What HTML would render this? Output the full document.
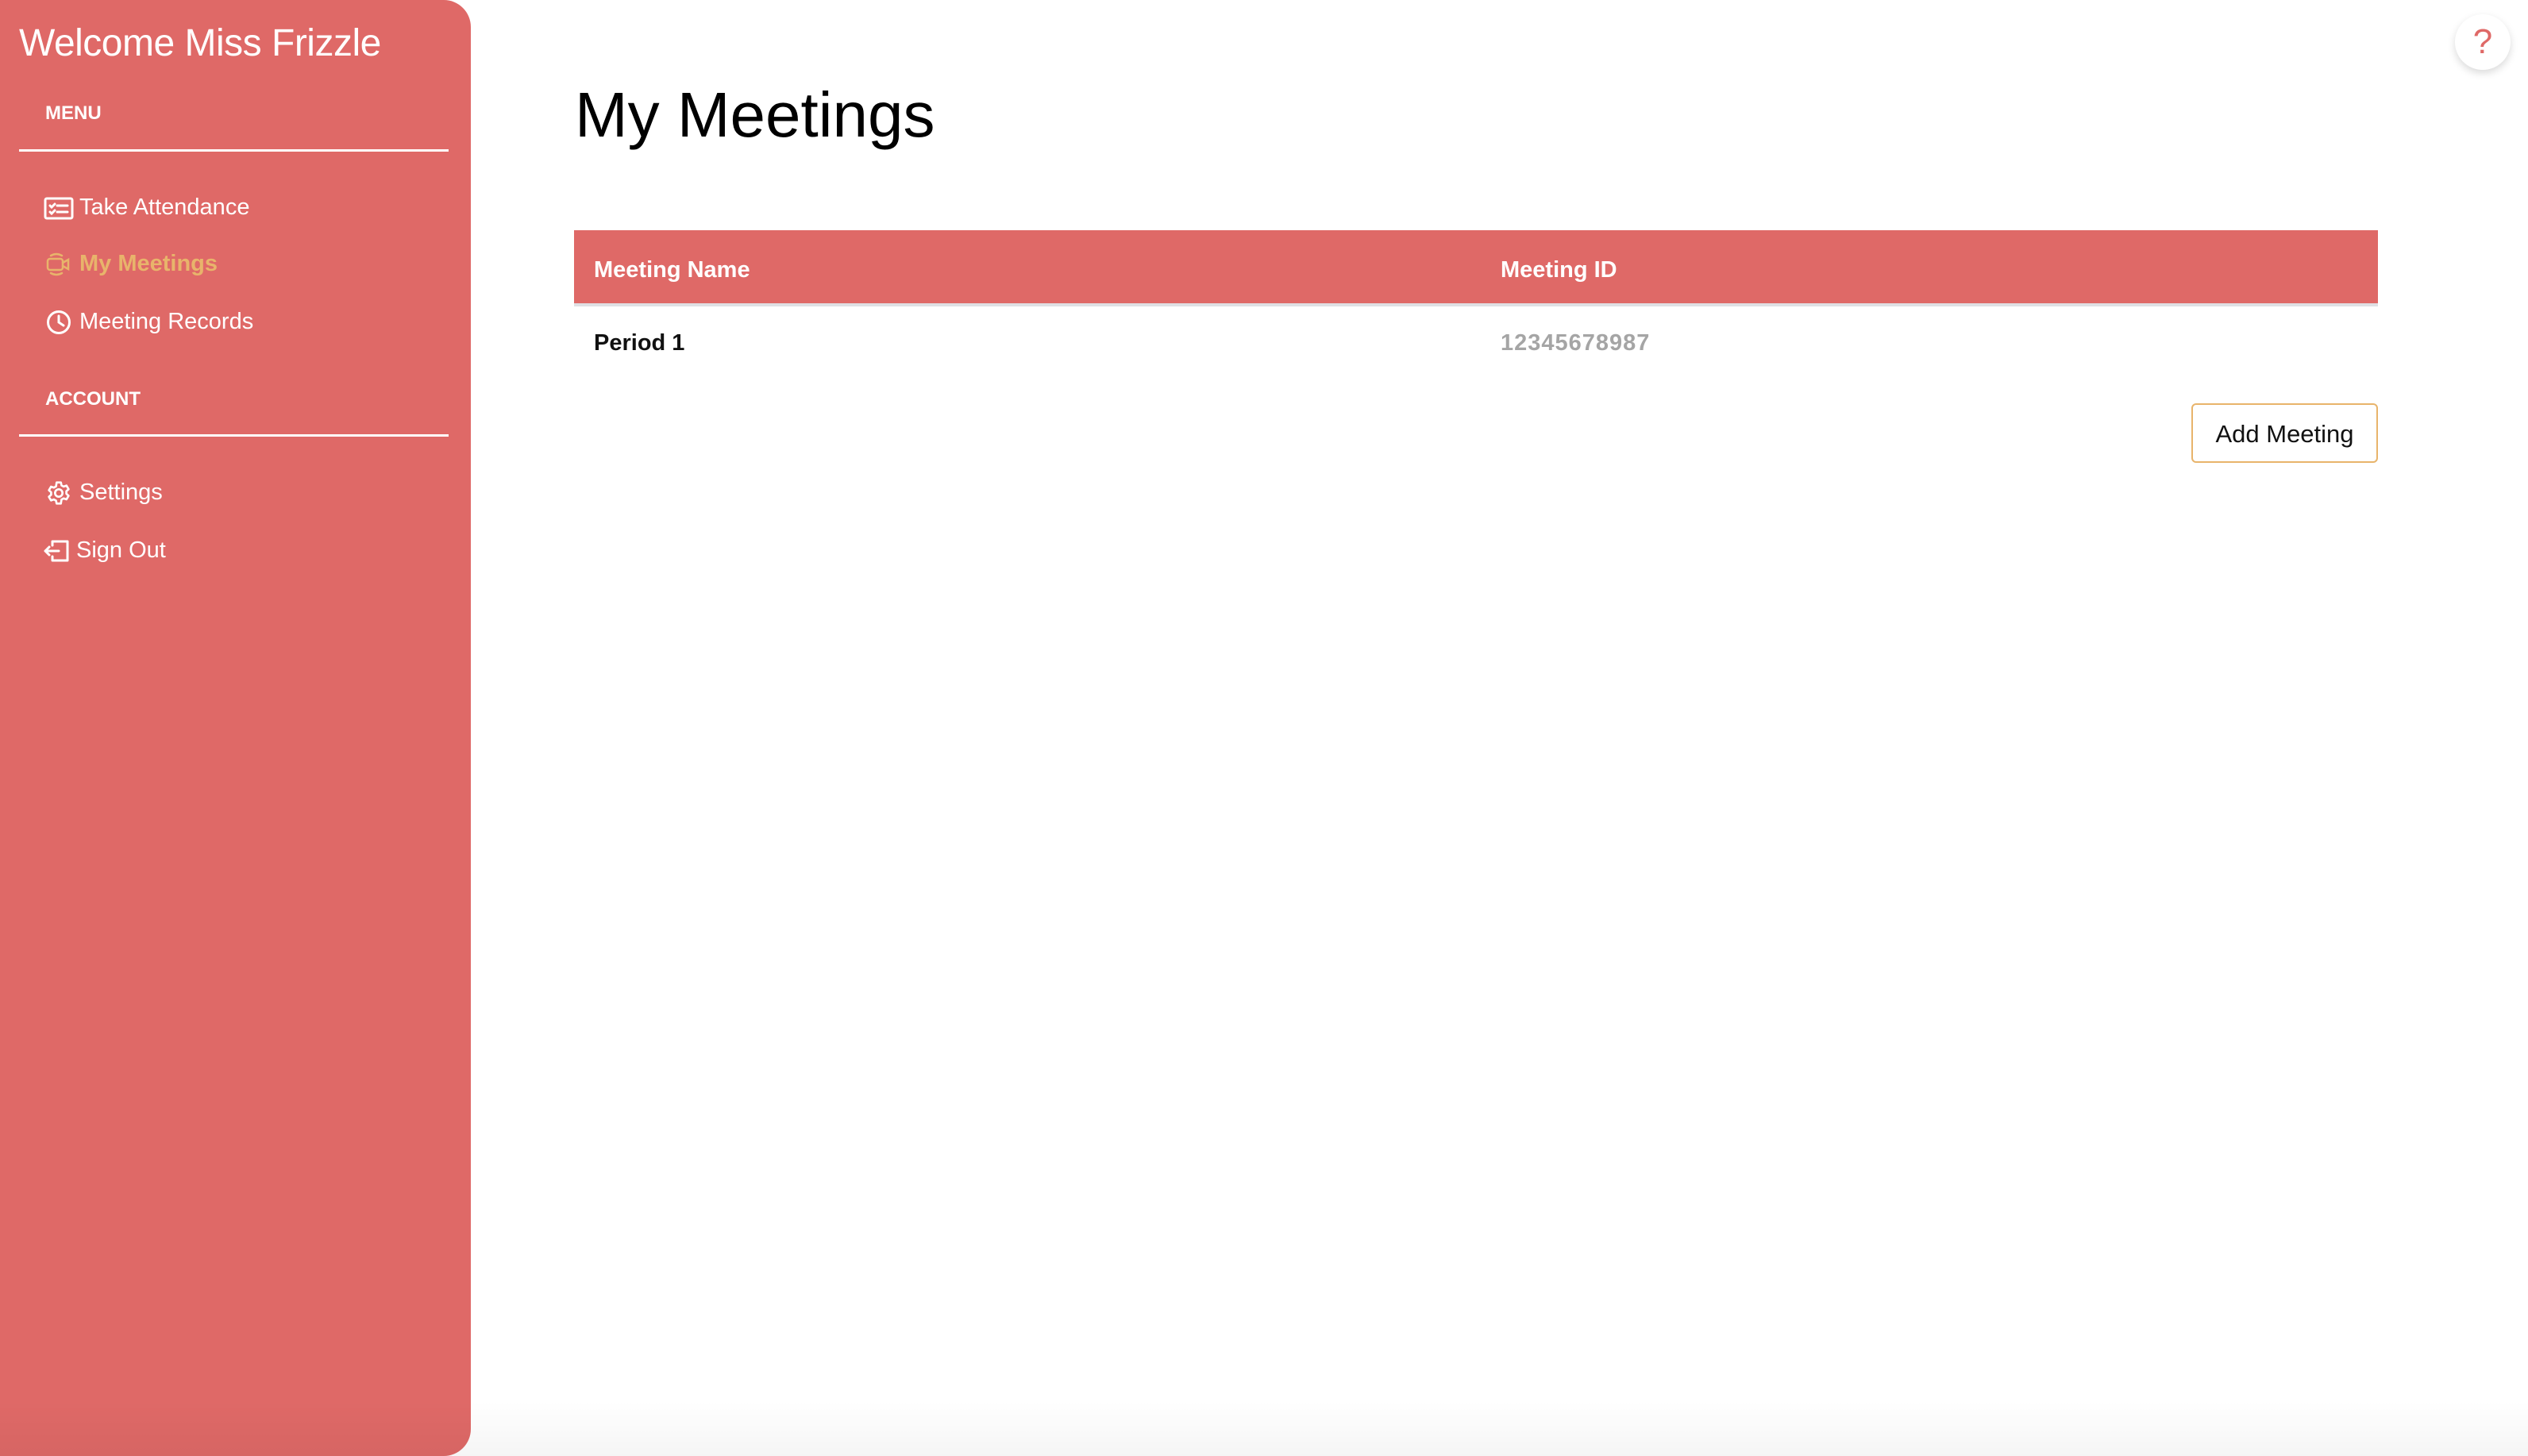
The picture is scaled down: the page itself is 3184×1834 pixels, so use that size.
<!DOCTYPE html>
<html><head><meta charset="utf-8"><style>
*{margin:0;padding:0;box-sizing:border-box}
html,body{width:3184px;height:1834px;overflow:hidden;background:#fff;font-family:"Liberation Sans",Arial,sans-serif;position:relative}
.sb{position:absolute;left:0;top:0;width:593px;height:1834px;background:#df6967;border-radius:0 34px 34px 0}
.t{position:absolute;white-space:nowrap;line-height:1}
.w{color:#fff}
.line{position:absolute;left:24px;width:541px;height:3px;background:#fff}
.ic{position:absolute}
.fade{position:absolute;left:0;bottom:0;width:3184px;height:70px;background:linear-gradient(rgba(0,0,0,0),rgba(0,0,0,0.04))}
</style></head><body>
<div class="sb"></div>
<div class="t w" style="left:24px;top:31px;font-size:48px;letter-spacing:-0.5px">Welcome Miss Frizzle</div>
<div class="t w" style="left:57px;top:131px;font-size:24px;font-weight:bold">MENU</div>
<div class="line" style="top:188px"></div>
<svg class="ic" style="left:55px;top:248px" width="38" height="29" viewBox="0 0 38 29" fill="none" stroke="#fff" stroke-width="3" stroke-linecap="round"><rect x="2" y="2" width="34" height="25" rx="2"/><path d="M8 11l2 2 4-4M8 19l2 2 4-4M17 11h13M17 19h13"/></svg>
<div class="t w" style="left:100px;top:247px;font-size:29px">Take Attendance</div>
<svg class="ic" style="left:58px;top:318px" width="32" height="30" viewBox="0 0 32 30" fill="none" stroke="#e8b46b" stroke-width="2.5" stroke-linecap="round"><rect x="2" y="8" width="19" height="14" rx="3"/><path d="M21 13l7-4v12l-7-4M6 4q7-4 14 0M6 26q7 4 14 0"/></svg>
<div class="t" style="left:100px;top:318px;font-size:29px;font-weight:bold;color:#e8b46b">My Meetings</div>
<svg class="ic" style="left:58px;top:390px" width="32" height="32" viewBox="0 0 32 32" fill="none" stroke="#fff" stroke-width="3" stroke-linecap="round"><circle cx="16" cy="16" r="13.5"/><path d="M16 8v8l6 4"/></svg>
<div class="t w" style="left:100px;top:391px;font-size:29px">Meeting Records</div>
<div class="t w" style="left:57px;top:491px;font-size:24px;font-weight:bold">ACCOUNT</div>
<div class="line" style="top:547px"></div>
<svg class="ic" style="left:58px;top:605px" width="32" height="32" viewBox="0 0 24 24" fill="none" stroke="#fff" stroke-width="2" stroke-linejoin="round"><path d="M10 2h4l.6 2.8 2 1.1 2.7-.9 2 3.4-2.1 1.9v2.4l2.1 1.9-2 3.4-2.7-.9-2 1.1L14 22h-4l-.6-2.8-2-1.1-2.7.9-2-3.4 2.1-1.9v-2.4L2.7 9.4l2-3.4 2.7.9 2-1.1z"/><circle cx="12" cy="12" r="3.5"/></svg>
<div class="t w" style="left:100px;top:606px;font-size:29px">Settings</div>
<svg class="ic" style="left:54px;top:679px" width="34" height="30" viewBox="0 0 34 30" fill="none" stroke="#fff" stroke-width="3" stroke-linecap="round" stroke-linejoin="round"><path d="M12 8V3h19v24H12v-5M3 15h17M8 10l-5 5 5 5"/></svg>
<div class="t w" style="left:96px;top:679px;font-size:29px">Sign Out</div>

<div class="t" style="left:724px;top:105px;font-size:80px;color:#000">My Meetings</div>
<div style="position:absolute;left:723px;top:290px;width:2272px;height:92px;background:#df6967"></div>
<div style="position:absolute;left:723px;top:382px;width:2272px;height:4px;background:#dfe0e4"></div>
<div class="t w" style="left:748px;top:326px;font-size:29px;font-weight:bold">Meeting Name</div>
<div class="t w" style="left:1890px;top:326px;font-size:29px;font-weight:bold">Meeting ID</div>
<div class="t" style="left:748px;top:418px;font-size:29px;font-weight:bold;color:#111">Period 1</div>
<div class="t" style="left:1890px;top:418px;font-size:29px;font-weight:bold;color:#a5a5a5;letter-spacing:1px">12345678987</div>
<div style="position:absolute;left:2760px;top:508px;width:235px;height:75px;border:2px solid #e8b46b;border-radius:6px"></div>
<div class="t" style="left:2760px;top:531px;width:235px;text-align:center;font-size:31px;color:#111">Add Meeting</div>
<div style="position:absolute;left:3092px;top:18px;width:70px;height:70px;border-radius:50%;background:#fff;box-shadow:0 4px 10px rgba(0,0,0,0.15)"></div>
<div class="t" style="left:3092px;top:31px;width:70px;text-align:center;font-size:44px;color:#df6967">?</div>
<div class="fade"></div>
</body></html>
